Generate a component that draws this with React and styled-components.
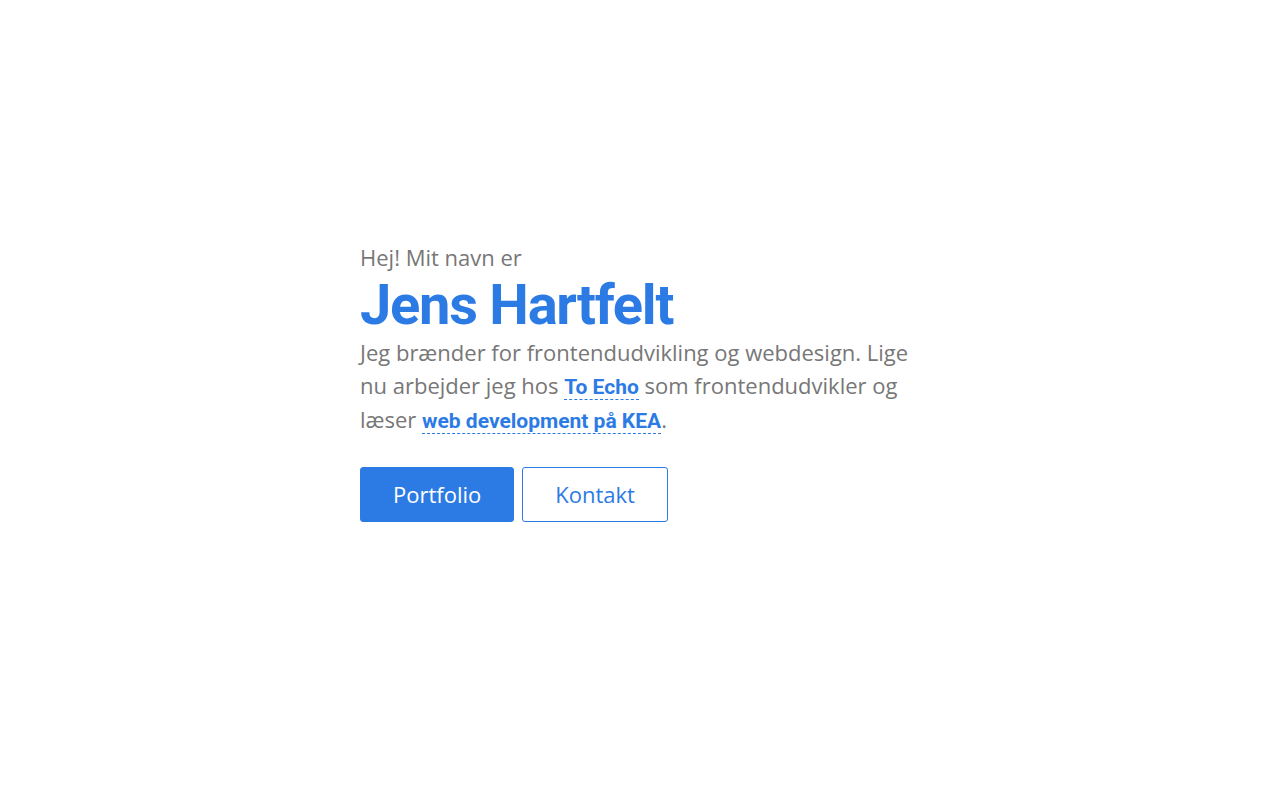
import React from 'react'
import styled, { createGlobalStyle } from 'styled-components'

const GlobalStyle = createGlobalStyle`
    html, body {
        margin: 0;
        padding: 0;
        background: #fff;
    }
    body {
        font-family: "Open Sans", "Liberation Sans", sans-serif;
    }
`

const Page = styled.main`
    min-height: 800px;
    display: flex;
    align-items: flex-start;
    justify-content: flex-start;
    padding: 240px 0 0 360px;
    box-sizing: border-box;
`

const Intro = styled.section`
    width: 560px;
    color: #777;
`

const Greeting = styled.p`
    margin: 0;
    font-size: 22px;
    line-height: 34px;
`

const Name = styled.h1`
    margin: 0;
    font-family: Roboto, "Liberation Sans", sans-serif;
    font-weight: 700;
    font-size: 56px;
    line-height: 62px;
    letter-spacing: -1.25px;
    color: #2c7be5;
`

const Text = styled.p`
    margin: 0;
    font-size: 22px;
    line-height: 32.5px;
`

const TextLink = styled.a`
    font-family: Roboto, "Liberation Sans", sans-serif;
    font-weight: 700;
    font-size: 21px;
    color: #2c7be5;
    text-decoration: none;
    border-bottom: 1px dashed #2c7be5;
`

const Actions = styled.div`
    display: flex;
    gap: 8px;
    margin-top: 29px;
`

const Button = styled.a`
    display: inline-flex;
    align-items: center;
    justify-content: center;
    box-sizing: border-box;
    height: 55px;
    padding: 0 32px;
    border-radius: 3px;
    font-size: 22px;
    text-decoration: none;
    border: 1px solid #2c7be5;
    background: ${(p) => (p.$primary ? '#2c7be5' : '#fff')};
    color: ${(p) => (p.$primary ? '#fff' : '#2c7be5')};
`

const App = () => {
    return (
        <>
            <GlobalStyle />
            <Page>
                <Intro>
                    <Greeting>Hej! Mit navn er</Greeting>
                    <Name>Jens Hartfelt</Name>
                    <Text>
                        Jeg brænder for frontendudvikling og webdesign. Lige nu arbejder jeg hos{' '}
                        <TextLink href="#">To Echo</TextLink> som frontendudvikler og læser{' '}
                        <TextLink href="#">web development på KEA</TextLink>.
                    </Text>
                    <Actions>
                        <Button href="#" $primary>Portfolio</Button>
                        <Button href="#">Kontakt</Button>
                    </Actions>
                </Intro>
            </Page>
        </>
    )
}

export default App
